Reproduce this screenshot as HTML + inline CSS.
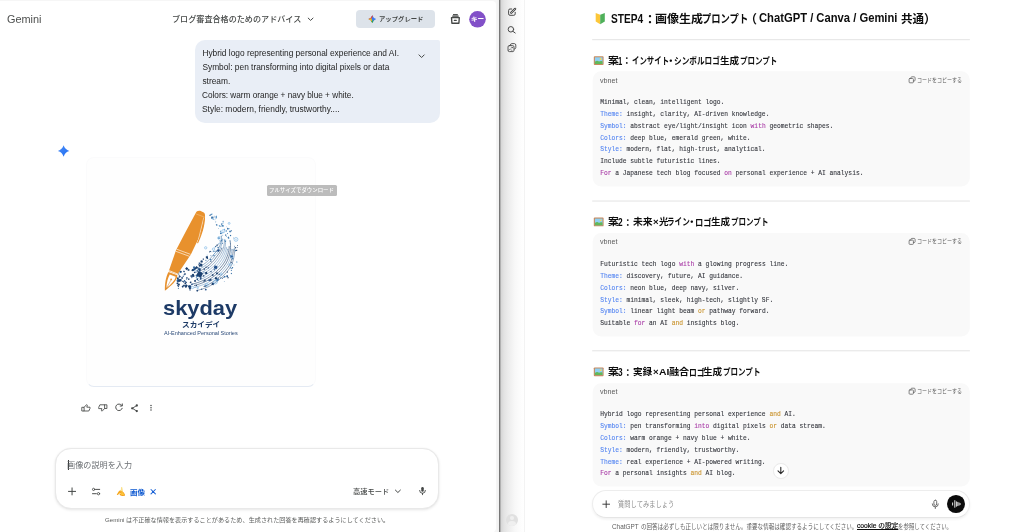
<!DOCTYPE html>
<html lang="ja">
<head>
<meta charset="utf-8">
<title>Gemini / ChatGPT</title>
<style>
*{box-sizing:border-box;margin:0;padding:0}
html,body{width:1024px;height:532px;overflow:hidden;background:#fff}
body{position:relative;font-family:"Liberation Sans","Noto Sans CJK JP",sans-serif;color:#1f1f1f}
#root{position:absolute;left:0;top:0;width:1024px;height:532px;overflow:hidden;will-change:transform}
.b{position:absolute}
.t{position:absolute;white-space:nowrap;line-height:1.3;transform-origin:0 0}
.t u{color:#0d0d0d;font-weight:400;-webkit-text-stroke:.18px;text-decoration-thickness:.5px;text-underline-offset:.7px}
svg{position:absolute;overflow:visible}
/* left : Gemini */
#gemBg{left:0;top:0;width:498px;height:532px;background:#f6f6f6}
#gemPg{left:0;top:1px;width:495.6px;height:532px;background:#fff;border-radius:0 4px 5px 0}
#upg{left:356px;top:10.2px;width:79px;height:18px;border-radius:4px;background:#dde3ea}
#bub{left:194.8px;top:40px;width:245px;height:82.6px;background:#e9eef6;border-radius:10px 2px 10px 10px}
#card{left:86px;top:157.3px;width:229.7px;height:229.7px;border-radius:8px;background:#fefefe;border:1px solid #fbfbfc;border-bottom-color:#e4eaf3}
#tip{left:267.1px;top:185.1px;width:70px;height:10.7px;background:#bcbcbc;border-radius:1.5px}
#inp{left:55px;top:447.8px;width:384.4px;height:61.4px;border-radius:16px;background:#fff;border:1px solid #e9e9e9;box-shadow:0 1px 3px rgba(0,0,0,.10),0 0 1px rgba(0,0,0,.05)}
#cur{left:67.6px;top:460.2px;width:.9px;height:10.2px;background:#333}
/* divider */
#dv{left:495.5px;top:0;width:30px;height:532px;background:linear-gradient(90deg,rgba(255,255,255,0) 0,rgba(240,240,240,.9) 2.6px,#8e8e8e 3px,#6e6e6e 3.7px,#8e8e8e 4.3px,#d4d4d4 4.7px,#e3e3e3 8px,#ececec 12px,#f8f8f8 19px,#fefefe 26px,#fff 30px)}
#sbb{left:524px;top:0;width:1px;height:532px;background:#f3f3f3}
#ava2{left:506px;top:513.7px;width:12px;height:12px;border-radius:50%;background:#e0e0e0;overflow:hidden}
#ava2 i{position:absolute;left:4.1px;top:2.6px;width:3.8px;height:3.8px;border-radius:50%;background:#efefef}
#ava2 b{position:absolute;left:2.2px;top:7.4px;width:7.6px;height:6px;border-radius:50%;background:#efefef}
/* right : ChatGPT */
pre{position:absolute;left:600.2px;font-family:"Liberation Mono","DejaVu Sans Mono",monospace;font-size:6.27px;line-height:11.8px;color:#33353c;-webkit-text-stroke:.1px;white-space:pre;font-weight:400;transform-origin:0 0}
.k{color:#5485f2}.m{color:#a83aa6}.o{color:#c9922a}
#bar{left:592.3px;top:490px;width:377.6px;height:28px;border-radius:14px;background:#fff;border:1px solid #ededed;border-bottom-color:#e5e5e5;box-shadow:0 1.5px 2.5px rgba(0,0,0,.06)}
#voice{left:946.9px;top:495px;width:17.8px;height:17.8px;border-radius:50%;background:#0b0b0b}
#down{left:773.2px;top:463px;width:15.6px;height:15.6px;border-radius:50%;background:#fff;border:1px solid #e9e9e9}
</style>
</head>
<body>
<div id="root">
<!-- ======================= Gemini window ======================= -->
<div class="b" id="gemBg"></div>
<div class="b" id="gemPg"></div>
<div class="b" id="upg"></div>
<div class="b" id="bub"></div>
<div class="b" id="card"></div>
<div class="b" id="tip"></div>
<div class="b" id="inp"></div>
<div class="b" id="cur"></div>
<svg id="icoL" width="498" height="532" viewBox="0 0 498 532" style="left:0;top:0" fill="none" stroke-linecap="round" stroke-linejoin="round">
  <defs>
    <clipPath id="starClip"><path d="M372.30 15.20Q373.31 18.09 376.20 19.10Q373.31 20.11 372.30 23.00Q371.29 20.11 368.40 19.10Q371.29 18.09 372.30 15.20Z"/></clipPath>
    <linearGradient id="gblue" x1="0" y1="0" x2="1" y2="1"><stop offset="0" stop-color="#4a8df8"/><stop offset="1" stop-color="#1f6cf0"/></linearGradient>
  </defs>
  <!-- avatar -->
  <circle cx="477.5" cy="19.3" r="8.3" fill="#8250c8" stroke="none"/>
  <!-- upgrade sparkle -->
  <g clip-path="url(#starClip)" stroke="none">
    <rect x="368" y="15" width="9" height="9" fill="#3b7cf0"/>
    <path d="M368 15H373.6L371 19.6L368 19.6Z" fill="#e8453c"/>
    <path d="M368 18.4L371.6 18.4L372.6 23.5H368Z" fill="#f9b90a"/>
    <path d="M370.9 21.2L374.6 20L373.6 23.5H370.9Z" fill="#2fa453"/>
  </g>
  <!-- title chevron -->
  <path d="M308.2 18.1L310.6 20.4L313 18.1" stroke="#444746" stroke-width="1"/>
  <!-- archive / box icon -->
  <g stroke="#444746" stroke-width="1.05">
    <path d="M453 14.7H457.8" stroke-width="1.25" stroke-linecap="butt"/><path d="M452.2 16.15H458.7" stroke-width="1.2" stroke-linecap="butt"/>
    <path d="M451.5 17.6H459.3L458.9 23.2H451.9Z" stroke-width="1.35"/>
    <path d="M454.3 20.4H456.3" stroke-width="1.1"/>
  </g>
  <!-- bubble chevron -->
  <path d="M419 54.9L421.6 57.5L424.2 54.9" stroke="#444746" stroke-width="1"/>
  <!-- gemini sparkle -->
  <path d="M63.60 145.30Q64.97 149.63 69.30 151.00Q64.97 152.37 63.60 156.70Q62.23 152.37 57.90 151.00Q62.23 149.63 63.60 145.30Z" fill="url(#gblue)" stroke="none"/>
  <!-- action icons -->
  <g stroke="#444746" stroke-width=".85">
    <path d="M82.2 407.3H84.1V411H82.2Z"/>
    <path d="M84.1 407.3L86.6 404.6L87.3 405.2L86.8 407.2H90V408.4L88.8 411H84.1"/>
    <path d="M106.5 408.5H104.6V404.8H106.5Z"/>
    <path d="M104.6 408.5L102.1 411.2L101.4 410.6L101.9 408.6H98.7V407.4L99.9 404.8H104.6"/>
    <path d="M121.6 405.2A3.3 3.3 0 1 0 122.2 408.3" stroke-width=".95"/>
    <path d="M122.3 403.9V406H120.2" stroke-width=".95"/>
    <path d="M136.6 405.6L132.4 408.3L136.6 411" stroke-width=".9"/>
  </g>
  <g fill="#444746" stroke="none">
    <circle cx="136.8" cy="405.5" r="1.15"/><circle cx="132.2" cy="408.3" r="1.15"/><circle cx="136.8" cy="411.1" r="1.15"/>
    <circle cx="151" cy="405.6" r=".75"/><circle cx="151" cy="407.8" r=".75"/><circle cx="151" cy="410" r=".75"/>
  </g>
  <!-- input icons -->
  <g stroke="#444746" stroke-width="1">
    <path d="M68.5 491.4H75.6M72.05 487.9V494.9"/>
    <path d="M95.6 489.4H99.7M92.5 493.7H96.3" stroke-width=".95"/>
    <circle cx="93.6" cy="489.4" r="1.15" stroke-width=".85"/><circle cx="98.5" cy="493.7" r="1.15" stroke-width=".85"/>
    <path d="M395.4 490.1L397.9 492.5L400.4 490.1"/>
  </g>
  <!-- banana -->
  <path d="M121.2 487.1C122 487 122.5 487.4 122.4 488.2C123 490 123 492 122.4 493.6L120 493.2C120.6 491.4 120.9 489.4 121.2 487.1Z" fill="#fbe08a" stroke="none"/>
  <path d="M120.6 490.2C119.6 490.4 118.2 491.6 116.9 494.4C116.7 495 117.2 495.3 117.7 494.9C119 493.9 120.2 493.2 121.2 492.8Z" fill="#f6a81f" stroke="none"/>
  <path d="M121 491.2C122.6 491 124.4 492.6 125 495C125.1 495.7 124.6 496 124 495.8C122 496.4 120.2 495.8 119.4 494.6C120.6 494 121.2 492.8 121 491.2Z" fill="#f39a16" stroke="none"/>
  <path d="M121.4 491.8C122.8 492 123.8 493.2 124.2 495C123 495.4 121.6 495.2 120.6 494.4C121.2 493.6 121.5 492.8 121.4 491.8Z" fill="#fcc53a" stroke="none"/>
  <!-- close x -->
  <path d="M151 489.5L155.4 493.9M155.4 489.5L151 493.9" stroke="#1a62d6" stroke-width="1.05"/>
  <!-- mic -->
  <g stroke="#444746">
    <rect x="421.25" y="486.9" width="2.5" height="4.9" rx="1.25" fill="#444746" stroke="none"/>
    <path d="M419.6 490.4A2.9 2.9 0 0 0 425.4 490.4" stroke-width=".9"/>
    <path d="M422.5 493.3V494.7" stroke-width=".9"/>
  </g>
</svg>
<svg id="logo" width="110" height="104" viewBox="0 0 563 532" style="left:150px;top:196px">
<path d="M243.1 482.5 L255.1 479.5 L266.9 476.1 L278.6 472.3 L290.1 468.0 L301.4 463.2 L312.0 457.2 L322.4 450.9 L332.5 444.2 L342.2 437.2 L351.7 429.8 L360.9 422.2 L369.7 414.1 L378.1 405.8 L386.2 397.2 L393.9 388.2 L401.2 379.0 L408.1 369.5 L414.5 359.6 L419.2 348.8 L423.0 337.7 L426.3 326.4 L428.9 315.1 L431.0 303.8 L432.4 292.4 L433.1 281.0 L433.2 269.7" stroke="#1c4170" stroke-width="2.2" fill="none"/>
<circle cx="243.1" cy="482.5" r="2.6" fill="#1c4170"/>
<circle cx="433.2" cy="269.7" r="2.4" fill="none" stroke="#2e6aa3" stroke-width="1.3"/>
<path d="M276.7 462.5 L286.2 458.8 L295.6 454.8 L304.4 449.9 L313.1 444.8 L321.6 439.4 L329.9 433.7 L338.0 427.8 L345.8 421.7 L353.4 415.4 L360.8 408.8 L367.9 402.0 L374.7 395.0 L381.3 387.8 L387.6 380.3 L393.6 372.7 L399.3 364.8 L404.7 356.8 L409.2 348.2 L412.8 339.2 L415.9 330.1 L418.7 321.0 L421.1 311.7 L423.0 302.5 L424.4 293.2 L425.5 283.8 L426.0 274.5" stroke="#1c4170" stroke-width="3.0" fill="none"/>
<circle cx="276.7" cy="462.5" r="2.6" fill="#1c4170"/>
<circle cx="426.0" cy="274.5" r="2.4" fill="none" stroke="#2e6aa3" stroke-width="1.3"/>
<path d="M229.7 466.5 L241.1 463.7 L252.2 460.5 L263.3 456.9 L274.2 452.9 L284.8 448.5 L295.2 443.4 L305.2 437.8 L314.8 431.7 L324.2 425.4 L333.4 418.7 L342.2 411.7 L350.7 404.5 L358.8 396.9 L366.6 389.0 L374.1 380.9 L381.2 372.5 L387.8 363.8 L394.1 354.9 L399.7 345.6 L404.1 335.7 L408.0 325.6 L411.3 315.5 L414.0 305.2 L416.2 294.9 L417.8 284.5 L418.7 274.1" stroke="#3a74ac" stroke-width="2.2" fill="none"/>
<circle cx="229.7" cy="466.5" r="2.6" fill="#3a74ac"/>
<circle cx="418.7" cy="274.1" r="2.4" fill="none" stroke="#2e6aa3" stroke-width="1.3"/>
<path d="M229.1 457.1 L241.8 453.7 L254.3 449.7 L266.6 445.2 L278.6 440.2 L290.3 434.6 L301.5 428.2 L312.3 421.3 L322.8 414.0 L332.9 406.4 L342.5 398.3 L351.8 389.8 L360.5 381.0 L368.8 371.9 L376.6 362.4 L383.8 352.5 L390.4 342.4 L395.7 331.5 L400.3 320.4 L404.1 309.2 L407.3 297.8 L409.7 286.4 L411.3 274.8 L412.2 263.3 L412.2 251.7 L411.4 240.2 L409.8 228.7" stroke="#1c4170" stroke-width="3.0" fill="none"/>
<circle cx="229.1" cy="457.1" r="2.6" fill="#1c4170"/>
<circle cx="409.8" cy="228.7" r="2.4" fill="none" stroke="#2e6aa3" stroke-width="1.3"/>
<path d="M218.6 450.1 L230.0 447.3 L241.2 443.9 L252.3 440.2 L263.2 436.0 L273.8 431.4 L284.2 426.3 L294.3 420.7 L304.0 414.7 L313.4 408.4 L322.5 401.7 L331.3 394.7 L339.7 387.4 L347.8 379.8 L355.4 371.9 L362.7 363.7 L369.5 355.3 L375.8 346.7 L381.7 337.7 L386.7 328.4 L391.1 318.8 L395.0 309.1 L398.3 299.2 L401.0 289.3 L403.1 279.3 L404.6 269.1 L405.4 259.0" stroke="#1c4170" stroke-width="3.0" fill="none"/>
<circle cx="218.6" cy="450.1" r="2.6" fill="#1c4170"/>
<circle cx="405.4" cy="259.0" r="2.4" fill="none" stroke="#2e6aa3" stroke-width="1.3"/>
<path d="M246.1 432.2 L254.9 428.8 L263.5 425.1 L272.0 421.2 L280.3 416.9 L288.4 412.4 L296.3 407.6 L304.0 402.6 L311.4 397.4 L318.7 392.0 L325.7 386.3 L332.5 380.5 L339.0 374.4 L345.2 368.2 L351.2 361.8 L356.9 355.2 L362.3 348.4 L367.4 341.5 L372.2 334.4 L376.5 327.2 L380.5 319.8 L384.1 312.2 L387.4 304.6 L390.3 296.9 L392.7 289.1 L394.8 281.2 L396.5 273.2" stroke="#2e6aa3" stroke-width="2.2" fill="none"/>
<circle cx="246.1" cy="432.2" r="2.6" fill="#2e6aa3"/>
<circle cx="396.5" cy="273.2" r="2.4" fill="none" stroke="#2e6aa3" stroke-width="1.3"/>
<path d="M240.9 423.8 L249.8 420.3 L258.4 416.5 L266.9 412.4 L275.2 408.1 L283.3 403.6 L291.3 398.8 L299.0 393.8 L306.5 388.6 L313.7 383.1 L320.7 377.4 L327.5 371.5 L333.9 365.4 L340.1 359.2 L346.0 352.7 L351.5 346.1 L356.8 339.3 L361.7 332.4 L366.3 325.3 L370.7 318.2 L374.7 310.9 L378.3 303.5 L381.6 296.0 L384.4 288.4 L386.9 280.6 L389.0 272.8 L390.6 264.9" stroke="#3a74ac" stroke-width="2.2" fill="none"/>
<circle cx="240.9" cy="423.8" r="2.6" fill="#3a74ac"/>
<circle cx="390.6" cy="264.9" r="2.4" fill="none" stroke="#2e6aa3" stroke-width="1.3"/>
<path d="M236.7 415.1 L246.6 411.0 L256.3 406.5 L265.8 401.6 L275.1 396.6 L284.2 391.3 L293.0 385.7 L301.4 379.8 L309.6 373.6 L317.4 367.1 L324.8 360.4 L331.9 353.4 L338.5 346.1 L344.8 338.7 L350.6 331.1 L355.9 323.2 L361.2 315.5 L366.1 307.6 L370.5 299.5 L374.4 291.2 L377.8 282.8 L380.7 274.2 L383.1 265.5 L384.9 256.6 L386.1 247.6 L386.7 238.4 L386.6 229.1" stroke="#2e6aa3" stroke-width="2.2" fill="none"/>
<circle cx="236.7" cy="415.1" r="2.6" fill="#2e6aa3"/>
<circle cx="386.6" cy="229.1" r="2.4" fill="none" stroke="#2e6aa3" stroke-width="1.3"/>
<path d="M235.7 405.2 L245.3 400.9 L254.6 396.2 L263.7 391.2 L272.7 386.4 L281.5 381.1 L290.0 375.6 L298.1 369.8 L305.9 363.7 L313.4 357.3 L320.5 350.7 L327.2 343.8 L333.5 336.8 L339.4 329.6 L344.8 322.2 L349.9 314.7 L355.2 307.4 L360.1 300.0 L364.5 292.3 L368.4 284.5 L371.8 276.4 L374.7 268.2 L377.1 259.8 L379.0 251.2 L380.2 242.4 L380.8 233.5 L380.8 224.3" stroke="#27588e" stroke-width="2.2" fill="none"/>
<circle cx="235.7" cy="405.2" r="2.6" fill="#27588e"/>
<circle cx="380.8" cy="224.3" r="2.4" fill="none" stroke="#2e6aa3" stroke-width="1.3"/>
<path d="M256.1 383.9 L262.3 380.5 L268.4 377.2 L274.3 373.7 L280.2 370.0 L285.8 366.2 L291.4 362.3 L296.7 358.2 L301.9 354.0 L306.9 349.7 L311.8 345.2 L316.4 340.7 L320.8 336.1 L325.1 331.3 L329.1 326.5 L333.0 321.7 L336.6 316.7 L339.9 311.7 L343.8 307.0 L347.5 302.3 L351.0 297.5 L354.3 292.5 L357.4 287.5 L360.3 282.3 L363.0 277.1 L365.4 271.8 L367.6 266.3" stroke="#1c4170" stroke-width="3.0" fill="none"/>
<circle cx="256.1" cy="383.9" r="2.6" fill="#1c4170"/>
<circle cx="367.6" cy="266.3" r="2.4" fill="none" stroke="#2e6aa3" stroke-width="1.3"/>
<path d="M235.1 384.1 L243.6 379.6 L251.7 374.8 L259.9 370.3 L268.0 365.7 L275.7 360.9 L283.2 355.7 L290.4 350.4 L297.3 344.8 L303.9 339.0 L310.0 333.0 L315.8 326.8 L321.3 320.5 L326.3 314.1 L330.9 307.6 L336.1 301.5 L341.3 295.5 L346.1 289.3 L350.6 282.8 L354.6 276.2 L358.3 269.3 L361.5 262.2 L364.2 254.8 L366.5 247.2 L368.3 239.4 L369.5 231.2 L370.1 222.8" stroke="#3a74ac" stroke-width="2.6" fill="none"/>
<circle cx="235.1" cy="384.1" r="2.6" fill="#3a74ac"/>
<circle cx="370.1" cy="222.8" r="2.4" fill="none" stroke="#2e6aa3" stroke-width="1.3"/>
<path d="M243.4 368.1 L251.3 363.4 L259.3 359.1 L267.0 354.5 L274.5 349.6 L281.6 344.5 L288.5 339.1 L295.0 333.6 L301.1 327.8 L306.9 321.9 L312.2 315.9 L317.2 309.7 L321.7 303.5 L326.7 297.7 L332.2 292.3 L337.3 286.6 L342.1 280.6 L346.5 274.4 L350.5 268.0 L354.1 261.3 L357.3 254.3 L360.0 247.0 L362.2 239.4 L363.8 231.4 L364.8 223.2 L365.2 214.5 L364.9 205.5" stroke="#27588e" stroke-width="2.6" fill="none"/>
<circle cx="243.4" cy="368.1" r="2.6" fill="#27588e"/>
<circle cx="364.9" cy="205.5" r="2.4" fill="none" stroke="#2e6aa3" stroke-width="1.3"/>
<rect x="171.8" y="400.7" width="5.0" height="5.0" fill="#2e6aa3" transform="rotate(30 174.3 403.2)"/>
<rect x="217.5" y="374.2" width="9.0" height="9.0" fill="#23508a" transform="rotate(30 222.0 378.7)"/>
<rect x="281.4" y="475.1" width="8.0" height="8.0" fill="#23508a" transform="rotate(15 285.4 479.1)"/>
<rect x="318.5" y="444.1" width="7.0" height="7.0" fill="#23508a" transform="rotate(0 322.0 447.6)"/>
<rect x="378.2" y="409.2" width="8.0" height="8.0" fill="#2e6aa3" transform="rotate(30 382.2 413.2)"/>
<rect x="198.2" y="456.7" width="7.0" height="7.0" fill="#2e6aa3" transform="rotate(45 201.7 460.2)"/>
<rect x="142.8" y="448.1" width="9.0" height="9.0" fill="#1c4170" transform="rotate(0 147.3 452.6)"/>
<rect x="298.8" y="427.5" width="8.0" height="8.0" fill="#23508a" transform="rotate(30 302.8 431.5)"/>
<rect x="252.6" y="354.8" width="6.0" height="6.0" fill="#1c4170" transform="rotate(45 255.6 357.8)"/>
<rect x="195.0" y="421.9" width="7.0" height="7.0" fill="#1c4170" transform="rotate(15 198.5 425.4)"/>
<rect x="323.8" y="445.5" width="6.0" height="6.0" fill="#23508a" transform="rotate(45 326.8 448.5)"/>
<rect x="326.2" y="374.4" width="6.0" height="6.0" fill="#23508a" transform="rotate(45 329.2 377.4)"/>
<rect x="220.4" y="369.9" width="11.0" height="11.0" fill="#23508a" transform="rotate(60 225.9 375.4)"/>
<rect x="181.4" y="438.7" width="7.0" height="7.0" fill="#1c4170" transform="rotate(15 184.9 442.2)"/>
<rect x="146.9" y="415.2" width="5.0" height="5.0" fill="#23508a" transform="rotate(60 149.4 417.7)"/>
<rect x="163.3" y="459.8" width="8.0" height="8.0" fill="#1c4170" transform="rotate(60 167.3 463.8)"/>
<rect x="220.7" y="359.9" width="9.0" height="9.0" fill="#2e6aa3" transform="rotate(60 225.2 364.4)"/>
<rect x="250.8" y="380.4" width="7.0" height="7.0" fill="#2e6aa3" transform="rotate(45 254.3 383.9)"/>
<rect x="210.7" y="448.4" width="7.0" height="7.0" fill="#23508a" transform="rotate(0 214.2 451.9)"/>
<rect x="164.5" y="433.9" width="5.0" height="5.0" fill="#1c4170" transform="rotate(60 167.0 436.4)"/>
<rect x="142.4" y="460.6" width="5.0" height="5.0" fill="#1c4170" transform="rotate(60 144.9 463.1)"/>
<rect x="139.7" y="418.9" width="6.0" height="6.0" fill="#1c4170" transform="rotate(30 142.7 421.9)"/>
<rect x="257.1" y="423.1" width="5.0" height="5.0" fill="#23508a" transform="rotate(45 259.6 425.6)"/>
<rect x="234.5" y="454.9" width="6.0" height="6.0" fill="#1c4170" transform="rotate(-20 237.5 457.9)"/>
<rect x="198.9" y="465.8" width="11.0" height="11.0" fill="#1c4170" transform="rotate(60 204.4 471.3)"/>
<rect x="139.2" y="426.5" width="6.0" height="6.0" fill="#2e6aa3" transform="rotate(0 142.2 429.5)"/>
<rect x="306.0" y="424.2" width="9.0" height="9.0" fill="#1c4170" transform="rotate(-20 310.5 428.7)"/>
<rect x="309.1" y="384.2" width="6.0" height="6.0" fill="#1c4170" transform="rotate(15 312.1 387.2)"/>
<rect x="225.0" y="388.0" width="6.0" height="6.0" fill="#1c4170" transform="rotate(60 228.0 391.0)"/>
<rect x="258.7" y="329.8" width="11.0" height="11.0" fill="#1c4170" transform="rotate(15 264.2 335.3)"/>
<rect x="283.8" y="361.5" width="6.0" height="6.0" fill="#1c4170" transform="rotate(60 286.8 364.5)"/>
<rect x="219.9" y="398.3" width="5.0" height="5.0" fill="#1c4170" transform="rotate(45 222.4 400.8)"/>
<rect x="170.6" y="382.6" width="7.0" height="7.0" fill="#1c4170" transform="rotate(30 174.1 386.1)"/>
<rect x="146.1" y="431.6" width="6.0" height="6.0" fill="#1c4170" transform="rotate(45 149.1 434.6)"/>
<rect x="232.7" y="360.2" width="11.0" height="11.0" fill="#1c4170" transform="rotate(45 238.2 365.7)"/>
<rect x="338.2" y="391.4" width="9.0" height="9.0" fill="#1c4170" transform="rotate(-20 342.7 395.9)"/>
<rect x="151.4" y="409.5" width="6.0" height="6.0" fill="#23508a" transform="rotate(15 154.4 412.5)"/>
<rect x="211.6" y="415.3" width="5.0" height="5.0" fill="#23508a" transform="rotate(45 214.1 417.8)"/>
<rect x="192.9" y="374.1" width="9.0" height="9.0" fill="#1c4170" transform="rotate(15 197.4 378.6)"/>
<rect x="391.2" y="406.4" width="8.0" height="8.0" fill="#23508a" transform="rotate(-20 395.2 410.4)"/>
<rect x="152.8" y="383.0" width="9.0" height="9.0" fill="#1c4170" transform="rotate(15 157.3 387.5)"/>
<rect x="262.0" y="474.5" width="5.0" height="5.0" fill="#1c4170" transform="rotate(60 264.5 477.0)"/>
<rect x="315.4" y="445.0" width="11.0" height="11.0" fill="#1c4170" transform="rotate(15 320.9 450.5)"/>
<rect x="137.2" y="426.4" width="11.0" height="11.0" fill="#2e6aa3" transform="rotate(30 142.7 431.9)"/>
<rect x="179.1" y="459.7" width="9.0" height="9.0" fill="#1c4170" transform="rotate(45 183.6 464.2)"/>
<rect x="246.7" y="368.9" width="8.0" height="8.0" fill="#23508a" transform="rotate(60 250.7 372.9)"/>
<rect x="151.0" y="425.2" width="11.0" height="11.0" fill="#23508a" transform="rotate(15 156.5 430.7)"/>
<rect x="240.0" y="381.1" width="6.0" height="6.0" fill="#1c4170" transform="rotate(15 243.0 384.1)"/>
<rect x="214.8" y="399.1" width="8.0" height="8.0" fill="#1c4170" transform="rotate(30 218.8 403.1)"/>
<rect x="271.1" y="405.4" width="7.0" height="7.0" fill="#1c4170" transform="rotate(60 274.6 408.9)"/>
<rect x="142.9" y="470.4" width="5.0" height="5.0" fill="#2e6aa3" transform="rotate(45 145.4 472.9)"/>
<rect x="232.2" y="388.4" width="5.0" height="5.0" fill="#23508a" transform="rotate(30 234.7 390.9)"/>
<rect x="256.2" y="416.3" width="8.0" height="8.0" fill="#1c4170" transform="rotate(-20 260.2 420.3)"/>
<rect x="174.8" y="395.6" width="8.0" height="8.0" fill="#1c4170" transform="rotate(-20 178.8 399.6)"/>
<rect x="218.6" y="375.8" width="6.0" height="6.0" fill="#2e6aa3" transform="rotate(15 221.6 378.8)"/>
<rect x="342.8" y="431.4" width="5.0" height="5.0" fill="#23508a" transform="rotate(45 345.3 433.9)"/>
<rect x="185.6" y="415.8" width="7.0" height="7.0" fill="#1c4170" transform="rotate(15 189.1 419.3)"/>
<rect x="248.6" y="370.8" width="11.0" height="11.0" fill="#1c4170" transform="rotate(-20 254.1 376.3)"/>
<rect x="273.5" y="432.7" width="6.0" height="6.0" fill="#1c4170" transform="rotate(45 276.5 435.7)"/>
<rect x="169.2" y="436.3" width="7.0" height="7.0" fill="#1c4170" transform="rotate(-20 172.7 439.8)"/>
<rect x="337.7" y="429.0" width="7.0" height="7.0" fill="#2e6aa3" transform="rotate(45 341.2 432.5)"/>
<rect x="202.2" y="477.4" width="6.0" height="6.0" fill="#1c4170" transform="rotate(-20 205.2 480.4)"/>
<rect x="204.7" y="457.3" width="7.0" height="7.0" fill="#23508a" transform="rotate(-20 208.2 460.8)"/>
<rect x="138.1" y="417.0" width="8.0" height="8.0" fill="#1c4170" transform="rotate(0 142.1 421.0)"/>
<rect x="309.0" y="331.7" width="5.0" height="5.0" fill="#1c4170" transform="rotate(30 311.5 334.2)"/>
<rect x="180.3" y="453.7" width="11.0" height="11.0" fill="#1c4170" transform="rotate(45 185.8 459.2)"/>
<rect x="295.5" y="364.8" width="6.0" height="6.0" fill="#23508a" transform="rotate(15 298.5 367.8)"/>
<rect x="238.5" y="422.8" width="7.0" height="7.0" fill="#1c4170" transform="rotate(0 242.0 426.3)"/>
<rect x="184.8" y="456.3" width="5.0" height="5.0" fill="#1c4170" transform="rotate(0 187.3 458.8)"/>
<rect x="243.8" y="375.4" width="5.0" height="5.0" fill="#2e6aa3" transform="rotate(15 246.3 377.9)"/>
<rect x="144.2" y="433.1" width="6.0" height="6.0" fill="#2e6aa3" transform="rotate(45 147.2 436.1)"/>
<rect x="351.2" y="397.8" width="6.0" height="6.0" fill="#1c4170" transform="rotate(60 354.2 400.8)"/>
<rect x="247.5" y="348.8" width="6.0" height="6.0" fill="#1c4170" transform="rotate(0 250.5 351.8)"/>
<rect x="160.2" y="415.1" width="8.0" height="8.0" fill="#1c4170" transform="rotate(30 164.2 419.1)"/>
<rect x="212.2" y="409.1" width="6.0" height="6.0" fill="#1c4170" transform="rotate(0 215.2 412.1)"/>
<rect x="392.0" y="406.6" width="5.0" height="5.0" fill="#2e6aa3" transform="rotate(60 394.5 409.1)"/>
<rect x="336.6" y="360.8" width="6.0" height="6.0" fill="#23508a" transform="rotate(0 339.6 363.8)"/>
<rect x="256.6" y="391.1" width="9.0" height="9.0" fill="#23508a" transform="rotate(60 261.1 395.6)"/>
<rect x="317.0" y="400.1" width="8.0" height="8.0" fill="#1c4170" transform="rotate(-20 321.0 404.1)"/>
<rect x="169.1" y="454.1" width="9.0" height="9.0" fill="#1c4170" transform="rotate(45 173.6 458.6)"/>
<rect x="285.8" y="308.2" width="11.0" height="11.0" fill="#1c4170" transform="rotate(0 291.3 313.7)"/>
<rect x="144.6" y="450.9" width="6.0" height="6.0" fill="#1c4170" transform="rotate(0 147.6 453.9)"/>
<rect x="277.0" y="427.2" width="8.0" height="8.0" fill="#1c4170" transform="rotate(60 281.0 431.2)"/>
<rect x="173.5" y="430.6" width="6.0" height="6.0" fill="#1c4170" transform="rotate(45 176.5 433.6)"/>
<rect x="136.1" y="443.1" width="8.0" height="8.0" fill="#1c4170" transform="rotate(15 140.1 447.1)"/>
<rect x="139.7" y="454.1" width="6.0" height="6.0" fill="#1c4170" transform="rotate(30 142.7 457.1)"/>
<rect x="203.9" y="438.1" width="8.0" height="8.0" fill="#1c4170" transform="rotate(15 207.9 442.1)"/>
<rect x="179.0" y="436.2" width="5.0" height="5.0" fill="#23508a" transform="rotate(0 181.5 438.7)"/>
<rect x="184.3" y="422.8" width="5.0" height="5.0" fill="#2e6aa3" transform="rotate(60 186.8 425.3)"/>
<rect x="342.6" y="424.6" width="9.0" height="9.0" fill="#2e6aa3" transform="rotate(45 347.1 429.1)"/>
<rect x="274.3" y="370.4" width="7.0" height="7.0" fill="#1c4170" transform="rotate(30 277.8 373.9)"/>
<rect x="273.1" y="386.4" width="5.0" height="5.0" fill="#2e6aa3" transform="rotate(-20 275.6 388.9)"/>
<rect x="206.8" y="405.4" width="8.0" height="8.0" fill="#1c4170" transform="rotate(60 210.8 409.4)"/>
<rect x="282.1" y="389.4" width="11.0" height="11.0" fill="#1c4170" transform="rotate(-20 287.6 394.9)"/>
<rect x="227.1" y="366.3" width="9.0" height="9.0" fill="#1c4170" transform="rotate(0 231.6 370.8)"/>
<rect x="140.2" y="441.9" width="5.0" height="5.0" fill="#23508a" transform="rotate(45 142.7 444.4)"/>
<rect x="236.6" y="404.6" width="9.0" height="9.0" fill="#2e6aa3" transform="rotate(-20 241.1 409.1)"/>
<rect x="174.5" y="431.3" width="5.0" height="5.0" fill="#2e6aa3" transform="rotate(60 177.0 433.8)"/>
<rect x="147.1" y="406.2" width="7.0" height="7.0" fill="#1c4170" transform="rotate(0 150.6 409.7)"/>
<rect x="332.5" y="415.5" width="11.0" height="11.0" fill="#1c4170" transform="rotate(15 338.0 421.0)"/>
<rect x="249.4" y="340.4" width="7.0" height="7.0" fill="#23508a" transform="rotate(0 252.9 343.9)"/>
<rect x="216.1" y="402.7" width="11.0" height="11.0" fill="#1c4170" transform="rotate(60 221.6 408.2)"/>
<rect x="280.5" y="455.6" width="8.0" height="8.0" fill="#1c4170" transform="rotate(30 284.5 459.6)"/>
<rect x="176.5" y="444.0" width="8.0" height="8.0" fill="#1c4170" transform="rotate(0 180.5 448.0)"/>
<rect x="226.2" y="430.0" width="9.0" height="9.0" fill="#1c4170" transform="rotate(-20 230.7 434.5)"/>
<rect x="166.8" y="407.8" width="6.0" height="6.0" fill="#23508a" transform="rotate(45 169.8 410.8)"/>
<rect x="237.7" y="480.8" width="8.0" height="8.0" fill="#1c4170" transform="rotate(30 241.7 484.8)"/>
<rect x="292.1" y="317.4" width="5.0" height="5.0" fill="#1c4170" transform="rotate(45 294.6 319.9)"/>
<rect x="145.7" y="384.5" width="6.0" height="6.0" fill="#23508a" transform="rotate(15 148.7 387.5)"/>
<rect x="283.5" y="326.5" width="5.0" height="5.0" fill="#2e6aa3" transform="rotate(0 286.0 329.0)"/>
<rect x="153.8" y="387.1" width="6.0" height="6.0" fill="#2e6aa3" transform="rotate(-20 156.8 390.1)"/>
<rect x="214.0" y="374.1" width="9.0" height="9.0" fill="#1c4170" transform="rotate(15 218.5 378.6)"/>
<rect x="213.5" y="377.4" width="7.0" height="7.0" fill="#1c4170" transform="rotate(15 217.0 380.9)"/>
<rect x="137.5" y="433.4" width="6.0" height="6.0" fill="#1c4170" transform="rotate(45 140.5 436.4)"/>
<rect x="198.0" y="459.0" width="11.0" height="11.0" fill="#1c4170" transform="rotate(0 203.5 464.5)"/>
<rect x="194.9" y="458.8" width="7.0" height="7.0" fill="#1c4170" transform="rotate(15 198.4 462.3)"/>
<rect x="250.9" y="353.3" width="6.0" height="6.0" fill="#1c4170" transform="rotate(30 253.9 356.3)"/>
<rect x="144.8" y="396.4" width="5.0" height="5.0" fill="#1c4170" transform="rotate(45 147.3 398.9)"/>
<rect x="262.3" y="354.9" width="6.0" height="6.0" fill="#1c4170" transform="rotate(0 265.3 357.9)"/>
<rect x="349.1" y="243.5" width="4.0" height="4.0" fill="#2e6aa3" transform="rotate(30 351.1 245.5)"/>
<rect x="327.8" y="291.8" width="5.0" height="5.0" fill="#6fa9d8" transform="rotate(0 330.3 294.3)"/>
<rect x="341.8" y="246.1" width="4.0" height="4.0" fill="#1c4170" transform="rotate(0 343.8 248.1)"/>
<rect x="357.1" y="229.7" width="4.0" height="4.0" fill="#2e6aa3" transform="rotate(45 359.1 231.7)"/>
<rect x="359.4" y="416.9" width="6.0" height="6.0" fill="#2e6aa3" transform="rotate(30 362.4 419.9)"/>
<rect x="309.7" y="303.6" width="4.0" height="4.0" fill="#2e6aa3" transform="rotate(45 311.7 305.6)"/>
<rect x="341.6" y="279.8" width="4.0" height="4.0" fill="#1c4170" transform="rotate(15 343.6 281.8)"/>
<rect x="324.2" y="280.1" width="6.0" height="6.0" fill="#2e6aa3" transform="rotate(45 327.2 283.1)"/>
<rect x="419.7" y="344.4" width="4.0" height="4.0" fill="#2e6aa3" transform="rotate(60 421.7 346.4)"/>
<rect x="372.6" y="415.4" width="4.0" height="4.0" fill="#1c4170" transform="rotate(-20 374.6 417.4)"/>
<rect x="355.4" y="238.7" width="4.0" height="4.0" fill="#6fa9d8" transform="rotate(30 357.4 240.7)"/>
<rect x="416.2" y="368.8" width="5.0" height="5.0" fill="#2e6aa3" transform="rotate(-20 418.7 371.3)"/>
<rect x="421.4" y="324.4" width="4.0" height="4.0" fill="#6fa9d8" transform="rotate(45 423.4 326.4)"/>
<rect x="328.7" y="264.0" width="3.0" height="3.0" fill="#2e6aa3" transform="rotate(0 330.2 265.5)"/>
<rect x="305.2" y="280.8" width="6.0" height="6.0" fill="#1c4170" transform="rotate(0 308.2 283.8)"/>
<rect x="302.4" y="284.1" width="4.0" height="4.0" fill="#1c4170" transform="rotate(15 304.4 286.1)"/>
<rect x="396.4" y="415.6" width="6.0" height="6.0" fill="#1c4170" transform="rotate(60 399.4 418.6)"/>
<rect x="443.9" y="260.9" width="4.0" height="4.0" fill="#1c4170" transform="rotate(-20 445.9 262.9)"/>
<rect x="440.4" y="275.2" width="6.0" height="6.0" fill="#1c4170" transform="rotate(0 443.4 278.2)"/>
<rect x="369.1" y="419.5" width="4.0" height="4.0" fill="#1c4170" transform="rotate(0 371.1 421.5)"/>
<rect x="335.3" y="279.9" width="5.0" height="5.0" fill="#2e6aa3" transform="rotate(45 337.8 282.4)"/>
<rect x="420.1" y="317.3" width="6.0" height="6.0" fill="#2e6aa3" transform="rotate(0 423.1 320.3)"/>
<rect x="269.7" y="319.9" width="6.0" height="6.0" fill="#1c4170" transform="rotate(30 272.7 322.9)"/>
<rect x="290.6" y="300.5" width="4.0" height="4.0" fill="#6fa9d8" transform="rotate(0 292.6 302.5)"/>
<rect x="345.5" y="260.5" width="6.0" height="6.0" fill="#2e6aa3" transform="rotate(0 348.5 263.5)"/>
<rect x="430.7" y="254.7" width="4.0" height="4.0" fill="#2e6aa3" transform="rotate(15 432.7 256.7)"/>
<rect x="393.9" y="386.4" width="5.0" height="5.0" fill="#1c4170" transform="rotate(60 396.4 388.9)"/>
<rect x="441.1" y="335.0" width="6.0" height="6.0" fill="#6fa9d8" transform="rotate(-20 444.1 338.0)"/>
<rect x="378.4" y="435.4" width="3.0" height="3.0" fill="#2e6aa3" transform="rotate(0 379.9 436.9)"/>
<rect x="426.0" y="213.4" width="3.0" height="3.0" fill="#2e6aa3" transform="rotate(45 427.5 214.9)"/>
<rect x="315.7" y="283.8" width="3.0" height="3.0" fill="#2e6aa3" transform="rotate(30 317.2 285.3)"/>
<rect x="307.7" y="322.4" width="6.0" height="6.0" fill="#2e6aa3" transform="rotate(30 310.7 325.4)"/>
<rect x="414.0" y="336.9" width="5.0" height="5.0" fill="#1c4170" transform="rotate(30 416.5 339.4)"/>
<rect x="427.6" y="351.0" width="4.0" height="4.0" fill="#6fa9d8" transform="rotate(30 429.6 353.0)"/>
<rect x="340.0" y="250.3" width="6.0" height="6.0" fill="#1c4170" transform="rotate(0 343.0 253.3)"/>
<rect x="434.4" y="276.6" width="6.0" height="6.0" fill="#2e6aa3" transform="rotate(30 437.4 279.6)"/>
<rect x="324.3" y="301.6" width="6.0" height="6.0" fill="#2e6aa3" transform="rotate(-20 327.3 304.6)"/>
<rect x="434.0" y="261.4" width="6.0" height="6.0" fill="#1c4170" transform="rotate(0 437.0 264.4)"/>
<rect x="414.0" y="393.9" width="5.0" height="5.0" fill="#2e6aa3" transform="rotate(30 416.5 396.4)"/>
<rect x="409.5" y="365.2" width="5.0" height="5.0" fill="#2e6aa3" transform="rotate(30 412.0 367.7)"/>
<rect x="348.7" y="421.6" width="4.0" height="4.0" fill="#1c4170" transform="rotate(45 350.7 423.6)"/>
<rect x="333.0" y="255.6" width="6.0" height="6.0" fill="#2e6aa3" transform="rotate(45 336.0 258.6)"/>
<rect x="445.7" y="251.3" width="4.0" height="4.0" fill="#1c4170" transform="rotate(-20 447.7 253.3)"/>
<rect x="413.9" y="378.3" width="5.0" height="5.0" fill="#2e6aa3" transform="rotate(45 416.4 380.8)"/>
<rect x="419.4" y="363.3" width="6.0" height="6.0" fill="#2e6aa3" transform="rotate(15 422.4 366.3)"/>
<rect x="371.2" y="183.8" width="5.0" height="5.0" fill="#6fa9d8" transform="rotate(60 373.7 186.3)"/>
<rect x="352.1" y="205.8" width="3.0" height="3.0" fill="#2e6aa3" transform="rotate(30 353.6 207.3)"/>
<rect x="370.4" y="136.5" width="5.0" height="5.0" fill="#6fa9d8" transform="rotate(-20 372.9 139.0)"/>
<rect x="311.4" y="90.0" width="4.0" height="4.0" fill="#6fa9d8" transform="rotate(45 313.4 92.0)"/>
<rect x="352.4" y="149.3" width="7.0" height="7.0" fill="#6fa9d8" transform="rotate(-20 355.9 152.8)"/>
<rect x="334.4" y="130.8" width="4.0" height="4.0" fill="#3f7fb5" transform="rotate(30 336.4 132.8)"/>
<rect x="370.5" y="149.3" width="7.0" height="7.0" fill="#3f7fb5" transform="rotate(15 374.0 152.8)"/>
<rect x="396.4" y="166.4" width="4.0" height="4.0" fill="#2e6aa3" transform="rotate(30 398.4 168.4)"/>
<rect x="319.5" y="106.1" width="4.0" height="4.0" fill="#2e6aa3" transform="rotate(45 321.5 108.1)"/>
<rect x="409.2" y="199.6" width="6.0" height="6.0" fill="#2e6aa3" transform="rotate(-20 412.2 202.6)"/>
<rect x="331.1" y="120.3" width="3.0" height="3.0" fill="#2e6aa3" transform="rotate(0 332.6 121.8)"/>
<rect x="358.1" y="177.9" width="5.0" height="5.0" fill="#3f7fb5" transform="rotate(0 360.6 180.4)"/>
<rect x="327.1" y="100.9" width="3.0" height="3.0" fill="#2e6aa3" transform="rotate(60 328.6 102.4)"/>
<rect x="306.6" y="97.2" width="3.0" height="3.0" fill="#3f7fb5" transform="rotate(60 308.1 98.7)"/>
<rect x="325.0" y="106.3" width="4.0" height="4.0" fill="#1c4170" transform="rotate(0 327.0 108.3)"/>
<rect x="383.0" y="229.2" width="6.0" height="6.0" fill="#3f7fb5" transform="rotate(15 386.0 232.2)"/>
<rect x="411.4" y="241.0" width="3.0" height="3.0" fill="#2e6aa3" transform="rotate(30 412.9 242.5)"/>
<rect x="369.3" y="240.5" width="4.0" height="4.0" fill="#2e6aa3" transform="rotate(30 371.3 242.5)"/>
<rect x="387.5" y="175.6" width="6.0" height="6.0" fill="#3f7fb5" transform="rotate(0 390.5 178.6)"/>
<rect x="364.6" y="217.5" width="6.0" height="6.0" fill="#6fa9d8" transform="rotate(0 367.6 220.5)"/>
<rect x="361.2" y="186.8" width="7.0" height="7.0" fill="#6fa9d8" transform="rotate(15 364.7 190.3)"/>
<rect x="373.0" y="131.4" width="4.0" height="4.0" fill="#6fa9d8" transform="rotate(-20 375.0 133.4)"/>
<rect x="348.9" y="211.5" width="7.0" height="7.0" fill="#3f7fb5" transform="rotate(45 352.4 215.0)"/>
<rect x="310.3" y="91.7" width="6.0" height="6.0" fill="#3f7fb5" transform="rotate(45 313.3 94.7)"/>
<rect x="358.3" y="188.8" width="4.0" height="4.0" fill="#1c4170" transform="rotate(15 360.3 190.8)"/>
<rect x="388.5" y="181.0" width="3.0" height="3.0" fill="#6fa9d8" transform="rotate(15 390.0 182.5)"/>
<rect x="360.2" y="186.0" width="5.0" height="5.0" fill="#6fa9d8" transform="rotate(30 362.7 188.5)"/>
<rect x="395.5" y="162.6" width="3.0" height="3.0" fill="#2e6aa3" transform="rotate(60 397.0 164.1)"/>
<rect x="363.4" y="226.5" width="5.0" height="5.0" fill="#2e6aa3" transform="rotate(60 365.9 229.0)"/>
<rect x="364.1" y="140.9" width="6.0" height="6.0" fill="#2e6aa3" transform="rotate(15 367.1 143.9)"/>
<rect x="408.0" y="181.5" width="4.0" height="4.0" fill="#2e6aa3" transform="rotate(0 410.0 183.5)"/>
<rect x="366.2" y="190.9" width="4.0" height="4.0" fill="#3f7fb5" transform="rotate(15 368.2 192.9)"/>
<rect x="337.6" y="101.3" width="5.0" height="5.0" fill="#3f7fb5" transform="rotate(0 340.1 103.8)"/>
<rect x="357.1" y="152.3" width="3.0" height="3.0" fill="#1c4170" transform="rotate(60 358.6 153.8)"/>
<rect x="337.9" y="144.2" width="7.0" height="7.0" fill="#2e6aa3" transform="rotate(60 341.4 147.7)"/>
<rect x="359.2" y="189.7" width="5.0" height="5.0" fill="#2e6aa3" transform="rotate(60 361.7 192.2)"/>
<rect x="398.4" y="208.4" width="6.0" height="6.0" fill="#2e6aa3" transform="rotate(45 401.4 211.4)"/>
<rect x="406.2" y="177.7" width="7.0" height="7.0" fill="#2e6aa3" transform="rotate(0 409.7 181.2)"/>
<rect x="313.8" y="109.9" width="7.0" height="7.0" fill="#2e6aa3" transform="rotate(-20 317.3 113.4)"/>
<rect x="335.4" y="102.3" width="6.0" height="6.0" fill="#6fa9d8" transform="rotate(60 338.4 105.3)"/>
<rect x="320.3" y="114.4" width="7.0" height="7.0" fill="#6fa9d8" transform="rotate(30 323.8 117.9)"/>
<rect x="366.4" y="148.3" width="7.0" height="7.0" fill="#3f7fb5" transform="rotate(45 369.9 151.8)"/>
<rect x="389.2" y="156.1" width="3.0" height="3.0" fill="#6fa9d8" transform="rotate(45 390.7 157.6)"/>
<rect x="378.1" y="168.4" width="6.0" height="6.0" fill="#6fa9d8" transform="rotate(15 381.1 171.4)"/>
<rect x="336.2" y="114.1" width="3.0" height="3.0" fill="#2e6aa3" transform="rotate(30 337.7 115.6)"/>
<rect x="402.4" y="164.7" width="5.0" height="5.0" fill="#6fa9d8" transform="rotate(60 404.9 167.2)"/>
<rect x="371.8" y="127.3" width="4.0" height="4.0" fill="#2e6aa3" transform="rotate(-20 373.8 129.3)"/>
<rect x="371.1" y="201.4" width="3.0" height="3.0" fill="#2e6aa3" transform="rotate(60 372.6 202.9)"/>
<rect x="316.5" y="105.9" width="4.0" height="4.0" fill="#2e6aa3" transform="rotate(0 318.5 107.9)"/>
<rect x="302.7" y="99.2" width="3.0" height="3.0" fill="#2e6aa3" transform="rotate(15 304.2 100.7)"/>
<rect x="306.5" y="95.0" width="4.0" height="4.0" fill="#1c4170" transform="rotate(-20 308.5 97.0)"/>
<rect x="317.8" y="90.1" width="4.0" height="4.0" fill="#6fa9d8" transform="rotate(30 319.8 92.1)"/>
<rect x="355.9" y="226.0" width="4.0" height="4.0" fill="#6fa9d8" transform="rotate(15 357.9 228.0)"/>
<rect x="351.5" y="214.3" width="5.0" height="5.0" fill="#2e6aa3" transform="rotate(60 354.0 216.8)"/>
<rect x="388.7" y="204.0" width="4.0" height="4.0" fill="#3f7fb5" transform="rotate(0 390.7 206.0)"/>
<rect x="398.4" y="211.3" width="7.0" height="7.0" fill="#3f7fb5" transform="rotate(-20 401.9 214.8)"/>
<rect x="394.7" y="190.3" width="4.0" height="4.0" fill="#2e6aa3" transform="rotate(60 396.7 192.3)"/>
<rect x="355.8" y="238.8" width="5.0" height="5.0" fill="#6fa9d8" transform="rotate(60 358.3 241.3)"/>
<rect x="349.6" y="163.8" width="3.0" height="3.0" fill="#3f7fb5" transform="rotate(60 351.1 165.3)"/>
<rect x="363.3" y="141.4" width="4.0" height="4.0" fill="#3f7fb5" transform="rotate(45 365.3 143.4)"/>
<rect x="304.7" y="96.3" width="4.0" height="4.0" fill="#3f7fb5" transform="rotate(0 306.7 98.3)"/>
<rect x="395.0" y="164.1" width="7.0" height="7.0" fill="#2e6aa3" transform="rotate(30 398.5 167.6)"/>
<rect x="335.7" y="107.4" width="7.0" height="7.0" fill="#6fa9d8" transform="rotate(-20 339.2 110.9)"/>
<rect x="313.6" y="105.8" width="7.0" height="7.0" fill="#2e6aa3" transform="rotate(15 317.1 109.3)"/>
<rect x="381.4" y="223.3" width="5.0" height="5.0" fill="#6fa9d8" transform="rotate(60 383.9 225.8)"/>
<rect x="413.5" y="175.2" width="5.0" height="5.0" fill="#2e6aa3" transform="rotate(60 416.0 177.7)"/>
<rect x="373.6" y="127.9" width="3.0" height="3.0" fill="#6fa9d8" transform="rotate(30 375.1 129.4)"/>
<rect x="384.5" y="196.8" width="6.0" height="6.0" fill="#2e6aa3" transform="rotate(45 387.5 199.8)"/>
<rect x="361.0" y="154.3" width="4.0" height="4.0" fill="#3f7fb5" transform="rotate(60 363.0 156.3)"/>
<rect x="338.0" y="106.1" width="3.0" height="3.0" fill="#2e6aa3" transform="rotate(-20 339.5 107.6)"/>
<rect x="241.0" y="388.0" width="26.0" height="26.0" fill="#1c4170" transform="rotate(25 254.0 401.0)"/>
<rect x="328.0" y="357.0" width="16.0" height="16.0" fill="#23508a" transform="rotate(20 336.0 365.0)"/>
<rect x="255.0" y="346.0" width="12.0" height="12.0" fill="#1c4170" transform="rotate(30 261.0 352.0)"/>
<rect x="182.0" y="366.0" width="12.0" height="12.0" fill="#1c4170" transform="rotate(40 188.0 372.0)"/>
<rect x="144.0" y="426.0" width="12.0" height="12.0" fill="#1c4170" transform="rotate(10 150.0 432.0)"/>
<rect x="410.5" y="302.5" width="13.0" height="13.0" fill="#23508a" transform="rotate(15 417.0 309.0)"/>
<rect x="344.5" y="273.5" width="11.0" height="11.0" fill="#23508a" transform="rotate(35 350.0 279.0)"/>
<circle cx="440" cy="222" r="10" fill="none" stroke="#86bce8" stroke-width="3.6"/>
<circle cx="440" cy="222" r="5" fill="#6fa9d8" opacity=".35"/>
<circle cx="375" cy="180" r="8" fill="none" stroke="#86bce8" stroke-width="3.6"/>
<circle cx="375" cy="180" r="3" fill="#6fa9d8" opacity=".35"/>
<circle cx="335" cy="440" r="10" fill="none" stroke="#86bce8" stroke-width="3.6"/>
<circle cx="335" cy="440" r="5" fill="#6fa9d8" opacity=".35"/>
<circle cx="290" cy="455" r="8" fill="none" stroke="#86bce8" stroke-width="3.6"/>
<circle cx="290" cy="455" r="3" fill="#6fa9d8" opacity=".35"/>
<circle cx="285" cy="265" r="6" fill="none" stroke="#86bce8" stroke-width="3.6"/>
<circle cx="285" cy="265" r="1.5" fill="#6fa9d8" opacity=".35"/>
<circle cx="325" cy="272" r="6" fill="none" stroke="#86bce8" stroke-width="3.6"/>
<circle cx="325" cy="272" r="1.5" fill="#6fa9d8" opacity=".35"/>
<circle cx="420" cy="310" r="7" fill="none" stroke="#86bce8" stroke-width="3.6"/>
<circle cx="420" cy="310" r="2" fill="#6fa9d8" opacity=".35"/>
<circle cx="365" cy="400" r="6" fill="none" stroke="#86bce8" stroke-width="3.6"/>
<circle cx="365" cy="400" r="1.5" fill="#6fa9d8" opacity=".35"/>
<circle cx="218" cy="468" r="6" fill="none" stroke="#86bce8" stroke-width="3.6"/>
<circle cx="218" cy="468" r="1.5" fill="#6fa9d8" opacity=".35"/>
<circle cx="405" cy="140" r="5" fill="none" stroke="#86bce8" stroke-width="3.6"/>
<circle cx="405" cy="140" r="1.5" fill="#6fa9d8" opacity=".35"/>
<circle cx="352" cy="215" r="6" fill="none" stroke="#86bce8" stroke-width="3.6"/>
<circle cx="352" cy="215" r="1.5" fill="#6fa9d8" opacity=".35"/>
<circle cx="410" cy="352" r="6" fill="none" stroke="#86bce8" stroke-width="3.6"/>
<circle cx="410" cy="352" r="1.5" fill="#6fa9d8" opacity=".35"/>
<circle cx="244" cy="470" r="4" fill="none" stroke="#86bce8" stroke-width="3.6"/>
<circle cx="244" cy="470" r="1.5" fill="#6fa9d8" opacity=".35"/>
<g transform="translate(40.94 40.94) scale(.885)">
<path d="M219 50C222 42 232 36 244 39L262 47C270 51 273 58 272 70L258 150L190 292L112 408L62 389L104 268L160 160Z" fill="#e8912d"/>
<path d="M265 78L230 222" stroke="#fff" stroke-width="3.5" fill="none"/>
<path d="M272 72C274 120 250 190 231 228L226 224C246 180 262 120 266 76Z" fill="#e8912d"/>
<path d="M216 56L270 76" stroke="#f7c98e" stroke-width="3" fill="none"/>
<path d="M107 261L188 291M102 273L183 303" stroke="#fff" stroke-width="3.6" fill="none"/>
<path d="M64 385L114 405" stroke="#fff" stroke-width="4.5" fill="none"/>
<path d="M61 393L112 412C111 446 74 474 40 501C39 462 45 420 61 393Z" fill="#e8912d"/>
<path d="M68 407L102 420C99 442 72 466 49 485C49 456 56 428 68 407Z" fill="#fff"/>
<path d="M45 494L75 440" stroke="#c9792a" stroke-width="2.8" fill="none"/>
<circle cx="76" cy="436" r="5" fill="#e8912d"/>
</g>
</svg>
<!-- ======================= divider + ChatGPT window ======================= -->
<div class="b" id="dv"></div>
<div class="b" id="sbb"></div>
<div class="b" id="ava2"><i></i><b></b></div>
<svg width="527" height="532" viewBox="497 0 527 532" style="left:497px;top:0">
  <path d="M592.2 39.7H969.9M592.2 201.05H969.9M592.2 350.8H969.9" stroke="#e3e3e3" stroke-width="1" fill="none"/>
  <rect x="592.7" y="71.2" width="377.1" height="115.4" rx="8.5" fill="#f9f9f9"/>
  <rect x="592.7" y="233.1" width="377.1" height="103.4" rx="8.5" fill="#f9f9f9"/>
  <rect x="592.7" y="383.2" width="377.1" height="103.2" rx="8.5" fill="#f9f9f9"/>
</svg>
<pre style="top:97.3px">Minimal, clean, intelligent logo.
<span class="k">Theme:</span> insight, clarity, AI-driven knowledge.
<span class="k">Symbol:</span> abstract eye/light/insight icon <span class="m">with</span> geometric shapes.
<span class="k">Colors:</span> deep blue, emerald green, white.
<span class="k">Style:</span> modern, flat, high-trust, analytical.
Include subtle futuristic lines.
<span class="m">For</span> a Japanese tech blog focused <span class="m">on</span> personal experience + AI analysis.</pre>
<pre style="top:259.2px">Futuristic tech logo <span class="m">with</span> a glowing progress line.
<span class="k">Theme:</span> discovery, future, AI guidance.
<span class="k">Colors:</span> neon blue, deep navy, silver.
<span class="k">Style:</span> minimal, sleek, high-tech, slightly SF.
<span class="k">Symbol:</span> linear light beam <span class="o">or</span> pathway forward.
Suitable <span class="m">for</span> an AI <span class="o">and</span> insights blog.</pre>
<pre style="top:409.4px">Hybrid logo representing personal experience <span class="o">and</span> AI.
<span class="k">Symbol:</span> pen transforming <span class="m">into</span> digital pixels <span class="o">or</span> data stream.
<span class="k">Colors:</span> warm orange + navy blue + white.
<span class="k">Style:</span> modern, friendly, trustworthy.
<span class="k">Theme:</span> real experience + AI-powered writing.
<span class="m">For</span> a personal insights <span class="o">and</span> AI blog.</pre>
<div class="b" id="bar"></div>
<div class="b" id="voice"></div>
<div class="b" id="down"></div>
<svg id="icoR" width="527" height="532" viewBox="497 0 527 532" style="left:497px;top:0" fill="none" stroke-linecap="round" stroke-linejoin="round">
  <!-- sidebar icons -->
  <g stroke="#4a4a4a" stroke-width=".95">
    <path d="M511.7 9H510A1.4 1.4 0 0 0 508.6 10.4V13.9A1.4 1.4 0 0 0 510 15.3H513.8A1.4 1.4 0 0 0 515.2 13.9V12.3" stroke-width="1"/>
    <path d="M511.2 12.8L515.1 8.9" stroke-width="2.3"/><path d="M511.3 12.7L515 9" stroke="#f6f6f6" stroke-width=".6"/>
    <circle cx="510.9" cy="29.3" r="2.75" stroke-width="1"/><path d="M513 31.4L515.2 33" stroke-width="1"/>
    <path d="M510.4 45.3V45C510.4 44.2 511 43.6 511.8 43.6H514.4C515.2 43.6 515.8 44.2 515.8 45V47.6C515.8 48.4 515.2 49 514.4 49H514.3" stroke-width=".9"/>
    <rect x="508" y="45.6" width="6" height="6" rx="1.3" stroke-width=".9"/>
    <path d="M508.4 50.4L510.2 48.9L512.6 51.2" stroke-width=".6"/><circle cx="512" cy="47.6" r=".6" stroke-width=".55"/>
  </g>
  <!-- beginner mark -->
  <path d="M595.7 12.9L600.2 14.8V24.2L595.7 21.6Z" fill="#fcc73a" stroke="none"/>
  <path d="M604.8 12.9L600.2 14.8V24.2L604.8 21.6Z" fill="#4fb05a" stroke="none"/>
  <!-- framed picture emoji x3 -->
  <g id="pic1" stroke="none">
    <rect x="593.8" y="56.2" width="9.8" height="8.8" rx=".9" fill="#c58a5e"/>
    <rect x="594.9" y="57.3" width="7.6" height="6.6" fill="#8fd0f4"/>
    <path d="M594.9 61.8C596.4 60.4 597.8 60.6 599 61.6C600 60.9 601.4 60.8 602.5 61.5V63.9H594.9Z" fill="#62b95a"/>
    <circle cx="600.6" cy="59" r=".9" fill="#ffd84a"/>
  </g>
  <use href="#pic1" y="161.3"/>
  <use href="#pic1" y="311.2"/>
  <!-- copy icons -->
  <g id="cp1" stroke="#5d5d5d" stroke-width=".75">
    <rect x="909.1" y="78.5" width="4.3" height="4.3" rx=".8"/>
    <path d="M910.9 78.4V77.7C910.9 77.2 911.3 76.8 911.8 76.8H914.2C914.7 76.8 915.1 77.2 915.1 77.7V80.1C915.1 80.6 914.7 81 914.2 81H913.5"/>
  </g>
  <use href="#cp1" y="161.6"/>
  <use href="#cp1" y="311.4"/>
  <!-- scroll down -->
  <path d="M780.8 467.3V473.4M778 470.9L780.8 473.7L783.6 470.9" stroke="#2a2a2a" stroke-width="1.1"/>
  <!-- composer -->
  <path d="M602.8 504.2H609.6M606.2 500.8V507.6" stroke="#2c2c2c" stroke-width=".9"/>
  <g stroke="#555" stroke-width=".85">
    <rect x="933.9" y="500.2" width="2.8" height="5.2" rx="1.4"/>
    <path d="M932.3 503.9A3 3 0 0 0 938.3 503.9M935.3 507V508.5"/>
  </g>
  <path d="M952.6 502.9V505.1M954.8 500.6V507.3M956.4 501.8V506.3M957.8 502.3V505.7M959 502.9V505.2M960.1 503.5V504.5" stroke="#e2e2e2" stroke-width="1"/>
</svg>
<!-- ======================= text ======================= -->
<div class="t" style="left:6.70px;top:11.50px;font-size:11.4px;color:#4d4f4e;transform:scaleX(0.957);">Gemini</div>
<div class="t" style="left:172.00px;top:15.00px;font-size:8.1px;font-weight:500;color:#444746;">ブログ審査合格のためのアドバイス</div>
<div class="t" style="left:379.00px;top:15.15px;font-size:6.2px;font-weight:700;color:#444746;transform:scaleX(1.026);">アップグレード</div>
<div class="t" style="left:471.10px;top:15.00px;font-size:6.2px;font-weight:700;color:#fff;transform:scaleX(1.070);">キー</div>
<div class="t" style="left:202.40px;top:48.00px;font-size:8.35px;color:#1f1f1f;">Hybrid logo representing personal experience and AI.</div>
<div class="t" style="left:202.40px;top:62.00px;font-size:8.35px;color:#1f1f1f;">Symbol: pen transforming into digital pixels or data</div>
<div class="t" style="left:202.40px;top:76.00px;font-size:8.35px;color:#1f1f1f;">stream.</div>
<div class="t" style="left:202.40px;top:90.00px;font-size:8.35px;color:#1f1f1f;transform:scaleX(0.985);">Colors: warm orange + navy blue + white.</div>
<div class="t" style="left:202.40px;top:104.00px;font-size:8.35px;color:#1f1f1f;transform:scaleX(1.008);">Style: modern, friendly, trustworthy....</div>
<div class="t" style="left:269.00px;top:187.22px;font-size:5.3px;font-weight:500;color:#fff;transform:scaleX(1.024);">フルサイズでダウンロード</div>
<div class="t" style="left:163.00px;top:295.00px;font-size:20.2px;font-weight:700;color:#1d3a66;transform:scaleX(1.081);">skyday</div>
<div class="t" style="left:182.00px;top:320.27px;font-size:7.2px;font-weight:700;color:#1d3a66;transform:scaleX(1.065);">スカイデイ</div>
<div class="t" style="left:164.00px;top:329.67px;font-size:5.5px;color:#2b4a78;">AI-Enhanced Personal Stories</div>
<div class="t" style="left:67.00px;top:461.00px;font-size:8.1px;color:#6b6f73;transform:scaleX(1.005);">画像の説明を入力</div>
<div class="t" style="left:130.00px;top:487.85px;font-size:7px;font-weight:700;color:#0b57d0;transform:scaleX(1.066);">画像</div>
<div class="t" style="left:353.00px;top:487.45px;font-size:7px;font-weight:500;color:#444746;transform:scaleX(1.036);">高速モード</div>
<div class="t" style="left:105.00px;top:516.90px;font-size:6px;color:#5a5c5b;transform:scaleX(1.021);">Gemini は不正確な情報を表示することがあるため、生成された回答を再確認するようにしてください。</div>
<div class="t" style="left:611.00px;top:10.78px;font-size:12.4px;font-weight:700;color:#0d0d0d;transform:scaleX(0.818);">STEP4</div>
<div class="t" style="left:644.00px;top:13.00px;font-size:12px;font-weight:700;color:#0d0d0d;">：</div>
<div class="t" style="left:655.00px;top:12.27px;font-size:11.5px;font-weight:700;color:#0d0d0d;transform:scaleX(1.046);">画像生成</div>
<div class="t" style="left:702.00px;top:12.20px;font-size:11.5px;font-weight:700;color:#0d0d0d;transform:scaleX(0.808);">プロンプト</div>
<div class="t" style="left:745.00px;top:13.19px;font-size:12px;font-weight:700;color:#0d0d0d;">（</div>
<div class="t" style="left:759.00px;top:11.00px;font-size:12.2px;font-weight:700;color:#0d0d0d;transform:scaleX(0.921);">ChatGPT / Canva / Gemini</div>
<div class="t" style="left:901.00px;top:12.07px;font-size:11.5px;font-weight:700;color:#0d0d0d;">共通</div>
<div class="t" style="left:924.00px;top:13.19px;font-size:12px;font-weight:700;color:#0d0d0d;">）</div>
<div class="t" style="left:608.00px;top:55.10px;font-size:9.6px;font-weight:700;color:#0d0d0d;transform:scaleX(1.126);">案</div>
<div class="t" style="left:618.00px;top:54.71px;font-size:10.4px;font-weight:700;color:#0d0d0d;transform:scaleX(0.737);">1</div>
<div class="t" style="left:622.00px;top:55.42px;font-size:9.6px;font-weight:700;color:#0d0d0d;">：</div>
<div class="t" style="left:632.00px;top:55.10px;font-size:9.6px;font-weight:700;color:#0d0d0d;transform:scaleX(0.775);">インサイト</div>
<div class="t" style="left:666.00px;top:54.93px;font-size:9.6px;font-weight:700;color:#0d0d0d;">・</div>
<div class="t" style="left:674.00px;top:55.40px;font-size:9.6px;font-weight:700;color:#0d0d0d;transform:scaleX(0.795);">シンボルロゴ</div>
<div class="t" style="left:720.00px;top:55.13px;font-size:9.6px;font-weight:700;color:#0d0d0d;">生成</div>
<div class="t" style="left:740.00px;top:54.99px;font-size:9.6px;font-weight:700;color:#0d0d0d;transform:scaleX(0.783);">プロンプト</div>
<div class="t" style="left:608.00px;top:216.40px;font-size:9.6px;font-weight:700;color:#0d0d0d;transform:scaleX(1.126);">案</div>
<div class="t" style="left:618.00px;top:216.06px;font-size:10.4px;font-weight:700;color:#0d0d0d;transform:scaleX(0.800);">2</div>
<div class="t" style="left:623.00px;top:216.72px;font-size:9.6px;font-weight:700;color:#0d0d0d;">：</div>
<div class="t" style="left:633.00px;top:216.40px;font-size:9.6px;font-weight:700;color:#0d0d0d;transform:scaleX(1.025);">未来</div>
<div class="t" style="left:653.00px;top:216.05px;font-size:9.6px;font-weight:700;color:#0d0d0d;">×</div>
<div class="t" style="left:659.00px;top:216.46px;font-size:9.6px;font-weight:700;color:#0d0d0d;">光</div>
<div class="t" style="left:667.00px;top:216.39px;font-size:9.6px;font-weight:700;color:#0d0d0d;transform:scaleX(0.792);">ライン</div>
<div class="t" style="left:687.00px;top:216.23px;font-size:9.6px;font-weight:700;color:#0d0d0d;">・</div>
<div class="t" style="left:695.00px;top:217.06px;font-size:9.6px;font-weight:700;color:#0d0d0d;transform:scaleX(0.863);">ロゴ</div>
<div class="t" style="left:711.00px;top:216.43px;font-size:9.6px;font-weight:700;color:#0d0d0d;">生成</div>
<div class="t" style="left:731.00px;top:216.30px;font-size:9.6px;font-weight:700;color:#0d0d0d;transform:scaleX(0.785);">プロンプト</div>
<div class="t" style="left:608.00px;top:366.30px;font-size:9.6px;font-weight:700;color:#0d0d0d;transform:scaleX(1.126);">案</div>
<div class="t" style="left:618.00px;top:366.08px;font-size:10.4px;font-weight:700;color:#0d0d0d;transform:scaleX(0.800);">3</div>
<div class="t" style="left:623.00px;top:366.62px;font-size:9.6px;font-weight:700;color:#0d0d0d;">：</div>
<div class="t" style="left:633.00px;top:366.30px;font-size:9.6px;font-weight:700;color:#0d0d0d;">実録</div>
<div class="t" style="left:653.00px;top:365.95px;font-size:9.6px;font-weight:700;color:#0d0d0d;">×</div>
<div class="t" style="left:659.00px;top:365.72px;font-size:9.6px;font-weight:700;color:#0d0d0d;transform:scaleX(1.082);">AI</div>
<div class="t" style="left:669.00px;top:366.28px;font-size:9.6px;font-weight:700;color:#0d0d0d;transform:scaleX(1.052);">融合</div>
<div class="t" style="left:689.00px;top:366.85px;font-size:9.6px;font-weight:700;color:#0d0d0d;transform:scaleX(0.814);">ロゴ</div>
<div class="t" style="left:703.00px;top:366.33px;font-size:9.6px;font-weight:700;color:#0d0d0d;">生成</div>
<div class="t" style="left:723.00px;top:366.20px;font-size:9.6px;font-weight:700;color:#0d0d0d;transform:scaleX(0.785);">プロンプト</div>
<div class="t" style="left:600.00px;top:76.84px;font-size:6.4px;color:#5d5d5d;transform:scaleX(1.119);">vbnet</div>
<div class="t" style="left:917.00px;top:75.51px;font-size:6.2px;color:#5d5d5d;transform:scaleX(0.810);">コードをコピーする</div>
<div class="t" style="left:600.00px;top:238.24px;font-size:6.4px;color:#5d5d5d;transform:scaleX(1.119);">vbnet</div>
<div class="t" style="left:917.00px;top:237.06px;font-size:6.2px;color:#5d5d5d;transform:scaleX(0.810);">コードをコピーする</div>
<div class="t" style="left:600.00px;top:387.94px;font-size:6.4px;color:#5d5d5d;transform:scaleX(1.119);">vbnet</div>
<div class="t" style="left:917.00px;top:386.86px;font-size:6.2px;color:#5d5d5d;transform:scaleX(0.810);">コードをコピーする</div>
<div class="t" style="left:618.00px;top:500.00px;font-size:8px;color:#8f8f8f;transform:scaleX(0.784);">質問してみましょう</div>
<div class="t" style="left:612.00px;top:522.80px;font-size:6.6px;color:#5d5d5d;transform:scaleX(0.969);">ChatGPT</div>
<div class="t" style="left:641.00px;top:522.94px;font-size:6.4px;color:#5d5d5d;transform:scaleX(0.870);">の回答は必ずしも正しいとは限りません。重要な情報は確認するようにしてください。</div>
<div class="t" style="left:857.00px;top:522.48px;font-size:6.4px;color:#0d0d0d;transform:scaleX(1.049);"><u>cookie の設定</u></div>
<div class="t" style="left:898.00px;top:522.87px;font-size:6.4px;color:#5d5d5d;transform:scaleX(0.851);">を参照してください。</div>
</div>
</body>
</html>
